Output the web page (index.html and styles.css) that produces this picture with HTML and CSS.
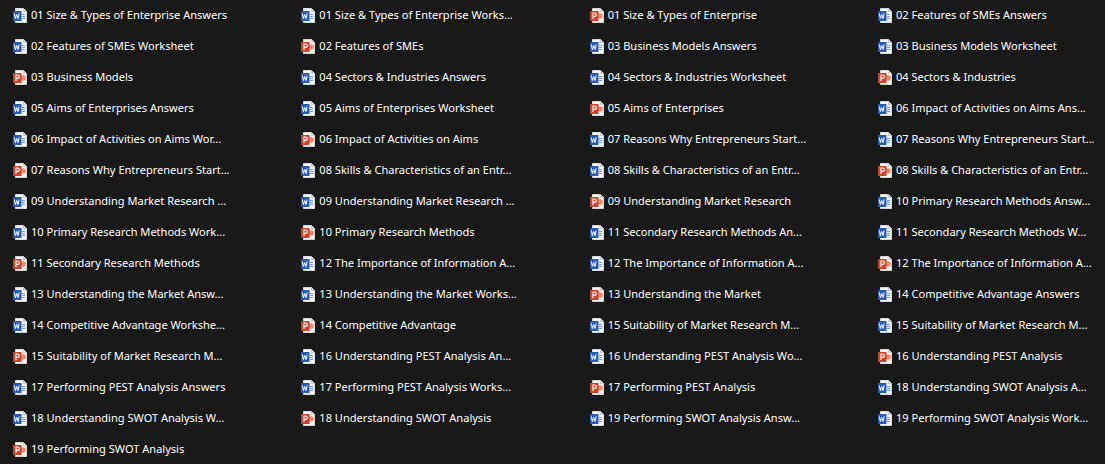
FILE: index.html
```html
<!DOCTYPE html>
<html lang="en">
<head>
<meta charset="utf-8">
<title>Files</title>
<link rel="stylesheet" href="styles.css">
</head>
<body>
<svg class="defs" width="0" height="0" aria-hidden="true">
<symbol id="w" viewBox="0 0 16 16">
<path d="M3.500 1.500h8l3 3v11h-11z" fill="#f5f6f8" stroke="#d5dae2" stroke-width="1"/>
<path d="M11 1v4h4" fill="#c4ccd8"/>
<path d="M10 7.500h3M10 9.500h3M10 11.500h3" stroke="#6f9ad6" stroke-width="1"/>
<rect x="1" y="4" width="8.500" height="10" fill="#2a5cb4"/>
<path d="M2.300 6.500l1.100 5 1.300-4 1.300 4 1.100-5" fill="none" stroke="#fff" stroke-width="1"/>
</symbol>
<symbol id="p" viewBox="0 0 16 16">
<path d="M3.500 1.500h8l3 3v11h-11z" fill="#f5f3f1" stroke="#dcd6d0" stroke-width="1"/>
<path d="M11 1v4h4" fill="#d6cfc8"/>
<circle cx="11" cy="9" r="2.800" fill="#e88a70"/>
<rect x="1" y="4" width="8.500" height="10" fill="#c8442a"/>
<path d="M4 12v-6h1.600a1.700 1.700 0 0 1 0 3.400h-1.600" fill="none" stroke="#fff" stroke-width="1.100"/>
</symbol>
</svg>
<main class="grid">
<div class="item"><svg class="ico"><use href="#w"/></svg><span>01 Size &amp; Types of Enterprise Answers</span></div>
<div class="item"><svg class="ico"><use href="#w"/></svg><span>01 Size &amp; Types of Enterprise Works...</span></div>
<div class="item"><svg class="ico"><use href="#p"/></svg><span>01 Size &amp; Types of Enterprise</span></div>
<div class="item"><svg class="ico"><use href="#w"/></svg><span>02 Features of SMEs Answers</span></div>
<div class="item"><svg class="ico"><use href="#w"/></svg><span>02 Features of SMEs Worksheet</span></div>
<div class="item"><svg class="ico"><use href="#p"/></svg><span>02 Features of SMEs</span></div>
<div class="item"><svg class="ico"><use href="#w"/></svg><span>03 Business Models Answers</span></div>
<div class="item"><svg class="ico"><use href="#w"/></svg><span>03 Business Models Worksheet</span></div>
<div class="item"><svg class="ico"><use href="#p"/></svg><span>03 Business Models</span></div>
<div class="item"><svg class="ico"><use href="#w"/></svg><span>04 Sectors &amp; Industries Answers</span></div>
<div class="item"><svg class="ico"><use href="#w"/></svg><span>04 Sectors &amp; Industries Worksheet</span></div>
<div class="item"><svg class="ico"><use href="#p"/></svg><span>04 Sectors &amp; Industries</span></div>
<div class="item"><svg class="ico"><use href="#w"/></svg><span>05 Aims of Enterprises Answers</span></div>
<div class="item"><svg class="ico"><use href="#w"/></svg><span>05 Aims of Enterprises Worksheet</span></div>
<div class="item"><svg class="ico"><use href="#p"/></svg><span>05 Aims of Enterprises</span></div>
<div class="item"><svg class="ico"><use href="#w"/></svg><span>06 Impact of Activities on Aims Ans...</span></div>
<div class="item"><svg class="ico"><use href="#w"/></svg><span>06 Impact of Activities on Aims Wor...</span></div>
<div class="item"><svg class="ico"><use href="#p"/></svg><span>06 Impact of Activities on Aims</span></div>
<div class="item"><svg class="ico"><use href="#w"/></svg><span>07 Reasons Why Entrepreneurs Start...</span></div>
<div class="item"><svg class="ico"><use href="#w"/></svg><span>07 Reasons Why Entrepreneurs Start...</span></div>
<div class="item"><svg class="ico"><use href="#p"/></svg><span>07 Reasons Why Entrepreneurs Start...</span></div>
<div class="item"><svg class="ico"><use href="#w"/></svg><span>08 Skills &amp; Characteristics of an Entr...</span></div>
<div class="item"><svg class="ico"><use href="#w"/></svg><span>08 Skills &amp; Characteristics of an Entr...</span></div>
<div class="item"><svg class="ico"><use href="#p"/></svg><span>08 Skills &amp; Characteristics of an Entr...</span></div>
<div class="item"><svg class="ico"><use href="#w"/></svg><span>09 Understanding Market Research ...</span></div>
<div class="item"><svg class="ico"><use href="#w"/></svg><span>09 Understanding Market Research ...</span></div>
<div class="item"><svg class="ico"><use href="#p"/></svg><span>09 Understanding Market Research</span></div>
<div class="item"><svg class="ico"><use href="#w"/></svg><span>10 Primary Research Methods Answ...</span></div>
<div class="item"><svg class="ico"><use href="#w"/></svg><span>10 Primary Research Methods Work...</span></div>
<div class="item"><svg class="ico"><use href="#p"/></svg><span>10 Primary Research Methods</span></div>
<div class="item"><svg class="ico"><use href="#w"/></svg><span>11 Secondary Research Methods An...</span></div>
<div class="item"><svg class="ico"><use href="#w"/></svg><span>11 Secondary Research Methods W...</span></div>
<div class="item"><svg class="ico"><use href="#p"/></svg><span>11 Secondary Research Methods</span></div>
<div class="item"><svg class="ico"><use href="#w"/></svg><span>12 The Importance of Information A...</span></div>
<div class="item"><svg class="ico"><use href="#w"/></svg><span>12 The Importance of Information A...</span></div>
<div class="item"><svg class="ico"><use href="#p"/></svg><span>12 The Importance of Information A...</span></div>
<div class="item"><svg class="ico"><use href="#w"/></svg><span>13 Understanding the Market Answ...</span></div>
<div class="item"><svg class="ico"><use href="#w"/></svg><span>13 Understanding the Market Works...</span></div>
<div class="item"><svg class="ico"><use href="#p"/></svg><span>13 Understanding the Market</span></div>
<div class="item"><svg class="ico"><use href="#w"/></svg><span>14 Competitive Advantage Answers</span></div>
<div class="item"><svg class="ico"><use href="#w"/></svg><span>14 Competitive Advantage Workshe...</span></div>
<div class="item"><svg class="ico"><use href="#p"/></svg><span>14 Competitive Advantage</span></div>
<div class="item"><svg class="ico"><use href="#w"/></svg><span>15 Suitability of Market Research M...</span></div>
<div class="item"><svg class="ico"><use href="#w"/></svg><span>15 Suitability of Market Research M...</span></div>
<div class="item"><svg class="ico"><use href="#p"/></svg><span>15 Suitability of Market Research M...</span></div>
<div class="item"><svg class="ico"><use href="#w"/></svg><span>16 Understanding PEST Analysis An...</span></div>
<div class="item"><svg class="ico"><use href="#w"/></svg><span>16 Understanding PEST Analysis Wo...</span></div>
<div class="item"><svg class="ico"><use href="#p"/></svg><span>16 Understanding PEST Analysis</span></div>
<div class="item"><svg class="ico"><use href="#w"/></svg><span>17 Performing PEST Analysis Answers</span></div>
<div class="item"><svg class="ico"><use href="#w"/></svg><span>17 Performing PEST Analysis Works...</span></div>
<div class="item"><svg class="ico"><use href="#p"/></svg><span>17 Performing PEST Analysis</span></div>
<div class="item"><svg class="ico"><use href="#w"/></svg><span>18 Understanding SWOT Analysis A...</span></div>
<div class="item"><svg class="ico"><use href="#w"/></svg><span>18 Understanding SWOT Analysis W...</span></div>
<div class="item"><svg class="ico"><use href="#p"/></svg><span>18 Understanding SWOT Analysis</span></div>
<div class="item"><svg class="ico"><use href="#w"/></svg><span>19 Performing SWOT Analysis Answ...</span></div>
<div class="item"><svg class="ico"><use href="#w"/></svg><span>19 Performing SWOT Analysis Work...</span></div>
<div class="item"><svg class="ico"><use href="#p"/></svg><span>19 Performing SWOT Analysis</span></div>
</main>
</body>
</html>
```
FILE: styles.css
```css
html, body {
  margin: 0;
  height: 100%;
  background: #191919;
  overflow: hidden;
}
.defs {
  position: absolute;
}
.grid {
  display: grid;
  grid-template-columns: repeat(3, 288.33px) 1fr;
  grid-auto-rows: 31px;
  padding-left: 12px;
  font-family: "Noto Sans", sans-serif;
  font-size: 11.05px;
  line-height: 16px;
  color: #fff;
}
.item {
  display: flex;
  align-items: flex-start;
  gap: 3px;
  padding-top: 7px;
  white-space: nowrap;
  box-sizing: border-box;
  height: 31px;
}
.ico {
  width: 16px;
  height: 16px;
  flex: none;
}
```
